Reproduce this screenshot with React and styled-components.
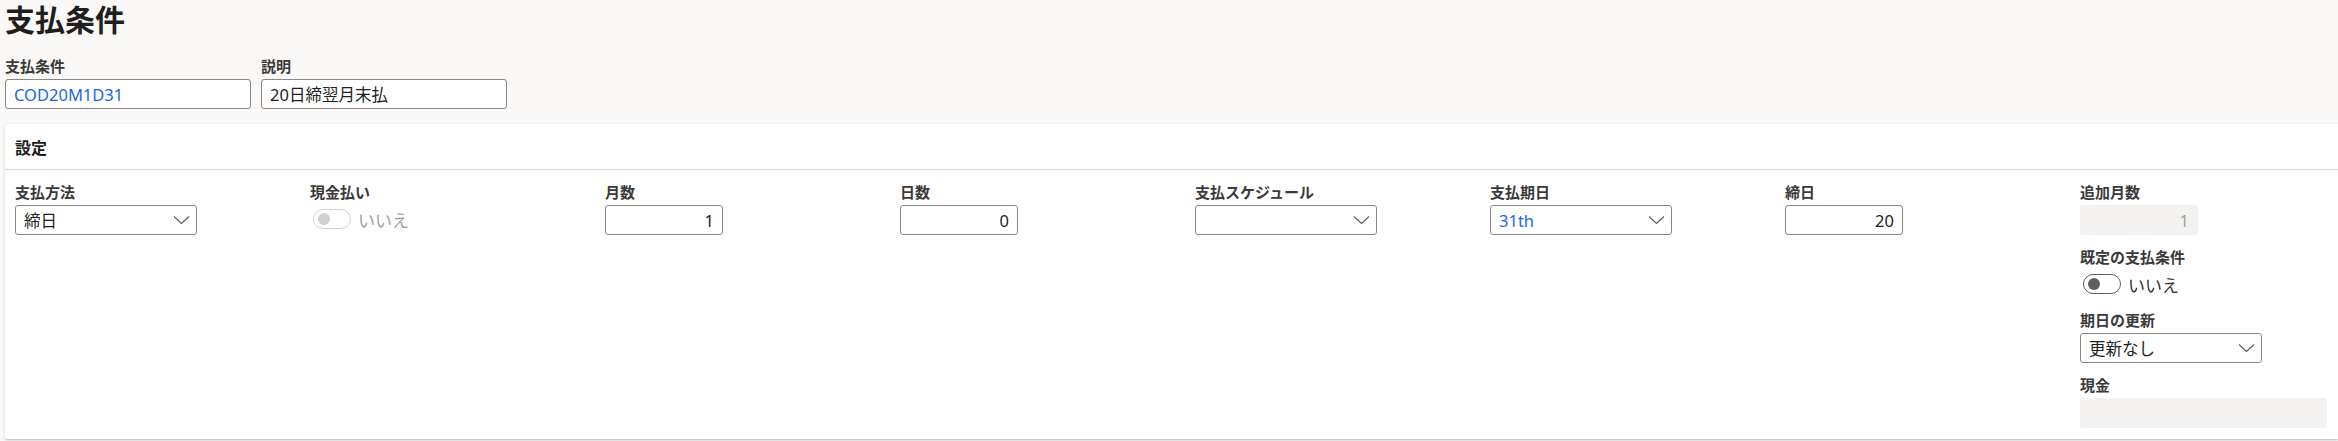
import React from "react";
import styled, { createGlobalStyle } from "styled-components";

const Global = createGlobalStyle`
  html, body { margin: 0; padding: 0; background: #faf9f8; }
  body {
    font-family: "Noto Sans", "Noto Sans CJK JP", sans-serif;
    color: #201f1e;
    overflow: hidden;
  }
  * { box-sizing: border-box; }
`;

const Page = styled.div`
  width: 2338px;
  height: 441px;
  padding-left: 5px;
  display: flex;
  flex-direction: column;
  background: #faf9f8;
`;

const Title = styled.h1`
  margin: 0;
  font-size: 30px;
  line-height: 40px;
  font-weight: 700;
  color: #201f1e;
`;

const HeaderFields = styled.div`
  display: flex;
  gap: 10px;
  margin-top: 16px;
`;

const Field = styled.div`
  display: flex;
  flex-direction: column;
  width: ${(p) => p.$w || "auto"};
`;

const Label = styled.label`
  font-size: 15px;
  line-height: 20px;
  font-weight: 600;
  color: #3b3a39;
  margin-bottom: 3px;
  white-space: nowrap;
`;

const TextBox = styled.div`
  height: 30px;
  width: ${(p) => p.$w || "100%"};
  border: 1px solid ${(p) => (p.$disabled ? "transparent" : "#8a8886")};
  background: ${(p) => (p.$disabled ? "#f3f2f1" : "#fff")};
  border-radius: 3px;
  display: flex;
  align-items: center;
  justify-content: ${(p) => (p.$right ? "flex-end" : "flex-start")};
  padding: 0 ${(p) => (p.$right ? "8px" : "0")} 0 8px;
  font-size: 16.5px;
  color: ${(p) => (p.$link ? "#2266e3" : p.$disabled ? "#a19f9d" : "#201f1e")};
  white-space: nowrap;
`;

const SelectBox = styled(TextBox)`
  justify-content: space-between;
  padding: 0 6px 0 8px;
`;

const Card = styled.section`
  margin-top: 15px;
  background: #fff;
  border-radius: 2px 0 0 2px;
  box-shadow: 0 1.6px 3.6px rgba(0, 0, 0, 0.13), 0 0.3px 0.9px rgba(0, 0, 0, 0.11);
  display: flex;
  flex-direction: column;
`;

const CardHeader = styled.div`
  height: 46px;
  padding-left: 10px;
  display: flex;
  align-items: center;
  font-size: 16px;
  font-weight: 700;
  color: #201f1e;
  border-bottom: 1px solid #dcdad8;
`;

const Grid = styled.div`
  display: grid;
  grid-template-columns: repeat(7, 295px) 1fr;
  padding: 12px 11px 11px 10px;
`;

const Column = styled.div`
  display: flex;
  flex-direction: column;
  gap: 12px;
`;

const ToggleRow = styled.div`
  height: 28px;
  display: flex;
  align-items: center;
  gap: 7px;
  padding-left: 3px;
  font-size: 17px;
  color: ${(p) => (p.$disabled ? "#a19f9d" : "#323130")};
`;

const Track = styled.span`
  width: 38px;
  height: 20px;
  border-radius: 10px;
  border: 1px solid ${(p) => (p.$disabled ? "#d2d0ce" : "#605e5c")};
  display: flex;
  align-items: center;
  padding-left: 4px;
`;

const Thumb = styled.span`
  width: 12px;
  height: 12px;
  border-radius: 50%;
  background: ${(p) => (p.$disabled ? "#d2d0ce" : "#605e5c")};
`;

const Chevron = () => (
  <svg width="17" height="10" viewBox="0 0 17 10">
    <polyline points="1,1.5 8.5,8.5 16,1.5" fill="none" stroke="#605e5c" strokeWidth="1.2" />
  </svg>
);

const Select = ({ value, link, w = "182px" }) => (
  <SelectBox $w={w} $link={link}>
    <span>{value}</span>
    <Chevron />
  </SelectBox>
);

const Toggle = ({ disabled }) => (
  <ToggleRow $disabled={disabled}>
    <Track $disabled={disabled}>
      <Thumb $disabled={disabled} />
    </Track>
    いいえ
  </ToggleRow>
);

export default function App() {
  return (
    <>
      <Global />
      <Page>
        <Title>支払条件</Title>
        <HeaderFields>
          <Field $w="246px">
            <Label>支払条件</Label>
            <TextBox $link>COD20M1D31</TextBox>
          </Field>
          <Field $w="246px">
            <Label>説明</Label>
            <TextBox>20日締翌月末払</TextBox>
          </Field>
        </HeaderFields>
        <Card>
          <CardHeader>設定</CardHeader>
          <Grid>
            <Column>
              <Field>
                <Label>支払方法</Label>
                <Select value="締日" />
              </Field>
            </Column>
            <Column>
              <Field>
                <Label>現金払い</Label>
                <Toggle disabled />
              </Field>
            </Column>
            <Column>
              <Field>
                <Label>月数</Label>
                <TextBox $w="118px" $right>1</TextBox>
              </Field>
            </Column>
            <Column>
              <Field>
                <Label>日数</Label>
                <TextBox $w="118px" $right>0</TextBox>
              </Field>
            </Column>
            <Column>
              <Field>
                <Label>支払スケジュール</Label>
                <Select value="" />
              </Field>
            </Column>
            <Column>
              <Field>
                <Label>支払期日</Label>
                <Select value="31th" link />
              </Field>
            </Column>
            <Column>
              <Field>
                <Label>締日</Label>
                <TextBox $w="118px" $right>20</TextBox>
              </Field>
            </Column>
            <Column>
              <Field>
                <Label>追加月数</Label>
                <TextBox $w="118px" $right $disabled>1</TextBox>
              </Field>
              <Field>
                <Label>既定の支払条件</Label>
                <Toggle />
              </Field>
              <Field>
                <Label>期日の更新</Label>
                <Select value="更新なし" />
              </Field>
              <Field>
                <Label>現金</Label>
                <TextBox $disabled />
              </Field>
            </Column>
          </Grid>
        </Card>
      </Page>
    </>
  );
}
